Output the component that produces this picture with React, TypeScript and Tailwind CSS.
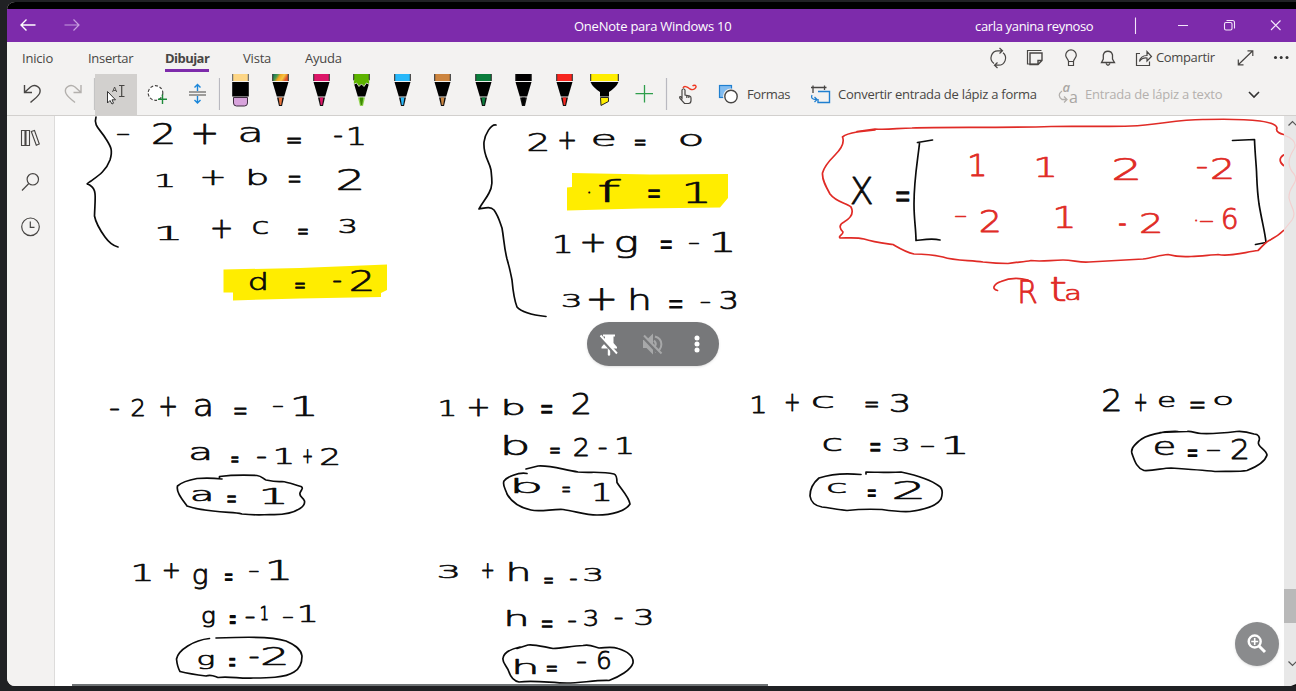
import type { ReactNode } from "react";

const INK_FONT = '"DejaVu Sans Light", "DejaVu Sans", sans-serif';
const INK_SIZE = 40;
const INK_STROKE = 0.85;

/* Ink box of a character relative to its origin on the baseline */
const boxes = new Map<string, { left: number; top: number; w: number; h: number }>();
function inkBox(ch: string) {
  const known = boxes.get(ch);
  if (known) return known;
  const ctx = document.createElement("canvas").getContext("2d")!;
  ctx.font = `200 ${INK_SIZE * 10}px ${INK_FONT}`;
  const m = ctx.measureText(ch);
  const box = {
    left: -m.actualBoundingBoxLeft / 10,
    top: -m.actualBoundingBoxAscent / 10,
    w: (m.actualBoundingBoxLeft + m.actualBoundingBoxRight) / 10,
    h: (m.actualBoundingBoxAscent + m.actualBoundingBoxDescent) / 10,
  };
  boxes.set(ch, box);
  return box;
}

type Mark = [string, number, number, number, number];

function Line({ marks, color = "#0b0b0b" }: { marks: Mark[]; color?: string }) {
  return (
    <g fill={color} stroke={color} strokeLinejoin="round" fontFamily={INK_FONT} fontWeight="200" fontSize={INK_SIZE}>
      {marks.map(([ch, x, y, w, h], i) => {
        const box = inkBox(ch);
        const pad = INK_STROKE;
        const sx = Math.max(w - pad, 1) / box.w;
        const sy = Math.max(h - pad, 1) / box.h;
        const tx = x + pad / 2 - box.left * sx;
        const ty = y + pad / 2 - box.top * sy;
        return (
          <text key={i} strokeWidth={INK_STROKE / Math.sqrt(sx * sy)} transform={`matrix(${sx} 0 0 ${sy} ${tx} ${ty})`}>
            {ch}
          </text>
        );
      })}
    </g>
  );
}

const BLACK_LINES: Mark[][] = [
  [["-", 117, 133, 12, 2], ["2", 153, 122, 20, 22], ["+", 193, 123, 23, 21], ["a", 240.5, 127, 19, 16], ["=", 287, 137, 14, 7], ["-", 334, 135.5, 8, 2], ["1", 349, 126, 15, 19.5]],
  [["1", 157, 173, 16, 14], ["+", 202, 170, 21.5, 15], ["b", 249, 168, 18, 17.5], ["=", 288.5, 176, 12, 7.5], ["2", 338, 168.5, 23.5, 21.5]],
  [["1", 158, 225, 21, 15], ["+", 212, 218.5, 19, 19.5], ["c", 253, 221, 15, 14], ["=", 298, 228.5, 10, 6.5], ["3", 339, 218, 16, 15.5]],
  [["d", 250, 272.5, 16, 18.5], ["=", 295, 282, 10, 7], ["-", 333, 280, 8, 2], ["2", 351, 270, 21, 21.5]],
  [["2", 528.5, 132, 19, 19.5], ["+", 559, 131.5, 16, 18], ["e", 593.5, 133.5, 21, 13], ["=", 634.5, 139, 11, 7], ["o", 680.5, 134.5, 21.5, 13]],
  [[".", 588, 191, 2, 2], ["f", 598.5, 178.5, 23, 23.5], ["=", 648, 189.5, 12, 8.5], ["1", 686, 181, 21.5, 22]],
  [["1", 555, 235, 15.5, 18.5], ["+", 582, 233, 22, 19], ["g", 616.5, 236, 20, 23], ["=", 660.5, 240.5, 11.5, 8.5], ["-", 689, 242.5, 10, 2], ["1", 713, 232, 19.5, 20]],
  [["3", 562.5, 293, 17, 15], ["+", 588.5, 288, 26, 22], ["h", 631, 287, 17.5, 23], ["=", 669, 300, 13.5, 9], ["-", 700.5, 301.5, 9.5, 2], ["3", 720, 290, 16, 19.5]],
  [["X", 851, 176, 21.5, 28], ["=", 896, 190.5, 13.5, 11]],
  [["-", 110, 408, 9, 2], ["2", 131.5, 398.5, 12.5, 18], ["+", 160, 396, 16, 20], ["a", 195, 398.5, 15.5, 18], ["=", 234, 408, 12.5, 7.5], ["-", 273, 405.5, 10, 2], ["1", 294, 395.5, 20.5, 20.5]],
  [["a", 191, 446.5, 18, 14], ["=", 231, 456, 7.5, 7], ["-", 257, 456.5, 9, 2], ["1", 276, 448, 16, 16], ["+", 303, 448.5, 9, 15], ["2", 321, 446.5, 17.5, 18.5]],
  [["a", 192.5, 490, 18, 12], ["=", 227, 496, 9, 7.5], ["1", 263, 488, 21.5, 16]],
  [["1", 440.5, 400, 14, 16], ["+", 468.5, 398.5, 19.5, 17.5], ["b", 504.5, 398, 19, 17.5], ["=", 541, 404, 11.5, 9.5], ["2", 572.5, 392.5, 17, 22]],
  [["b", 504.5, 434.5, 23, 21], ["=", 550, 446.5, 10, 7], ["2", 574, 436.5, 14, 20], ["-", 598.5, 447.5, 8, 2], ["1", 617, 436.5, 15, 18]],
  [["b", 514.5, 477, 25.5, 16.5], ["=", 562, 487, 8, 6], ["1", 594, 482.5, 15.5, 18.5]],
  [["1", 752, 396, 13, 17.5], ["+", 785.5, 393.5, 13.5, 18], ["c", 813, 395.5, 20.5, 13.5], ["=", 865, 401.5, 13, 6.5], ["3", 890.5, 393.5, 17.5, 19.5]],
  [["c", 823.5, 437.5, 18, 14], ["=", 870, 442.5, 10.5, 9], ["3", 893, 436.5, 15, 15], ["-", 921, 445, 13, 2], ["1", 945, 435.5, 20.5, 18.5]],
  [["c", 828, 482.5, 18, 11], ["=", 867.5, 488.5, 8.5, 8], ["2", 894, 479.5, 28, 20]],
  [["2", 1103, 387, 17, 24], ["+", 1135, 394, 11.5, 17.5], ["e", 1159, 396, 15.5, 12], ["=", 1190, 401.5, 14.5, 7.5], ["o", 1214.5, 396, 17.5, 10]],
  [["e", 1155, 440.5, 19, 15], ["=", 1187.5, 449, 10, 8], ["-", 1207, 449.5, 13, 2], ["2", 1231.5, 438, 16, 21]],
  [["1", 134, 563.5, 17, 18], ["+", 163.5, 563, 15.5, 15.5], ["g", 193.5, 568.5, 13.5, 21.5], ["=", 224.5, 572.5, 8, 8], ["-", 249, 570.5, 9.5, 2], ["1", 269, 559.5, 20, 21]],
  [["g", 202.5, 610.5, 12, 17], ["=", 229.5, 616, 6.5, 8.5], ["-", 245.5, 616, 9, 2], ["1", 261, 606, 7, 14.5], ["-", 283, 616, 10, 2], ["1", 300, 604.5, 15.5, 17.5]],
  [["g", 198.5, 654.5, 15, 15], ["=", 229, 657.5, 6.5, 9], ["-", 249.5, 656, 9, 2], ["2", 262.5, 646, 23.5, 19.5]],
  [["3", 438.5, 564.5, 19, 14], ["+", 482, 563, 11.5, 15.5], ["h", 509.5, 561, 18.5, 20.5], ["=", 544, 577.5, 9, 6.5], ["-", 570, 578.5, 7, 2], ["3", 584, 567.5, 17, 14.5]],
  [["h", 507.5, 609, 18.5, 17.5], ["=", 541.5, 620, 11, 8], ["-", 568, 620.5, 8, 2], ["3", 584, 610.5, 13, 16.5], ["-", 614.5, 617.5, 8, 2], ["3", 635, 608.5, 16.5, 17]],
  [["h", 515.5, 658, 20, 16], ["=", 546.5, 665, 10.5, 7], ["-", 577, 661.5, 9, 2], ["6", 598, 650.5, 12.5, 19.5]],
];

const RED_LINES: Mark[][] = [
  [["1", 970, 153, 14.5, 23], ["1", 1037, 156.5, 17.5, 21], ["2", 1114, 156, 24.5, 24], ["-", 1197, 166, 10, 2.2], ["2", 1212, 157, 20, 22]],
  [["-", 955, 215, 11, 2], ["2", 980.5, 208, 18.5, 24], ["1", 1056, 205.5, 17, 22.5], ["-", 1119, 223, 7, 2.5], ["2", 1141, 212.5, 19.5, 21], [".", 1195, 219, 2, 2], ["-", 1200, 220, 13, 2], ["6", 1223, 208, 14, 22]],
  [["R", 1020, 279, 17, 24], ["t", 1051, 277, 15, 24], ["a", 1066, 289, 13, 12]],
];

function Page() {
  return (
    <svg width="1229" height="570" viewBox="55 116 1229 570" className="block shrink-0 overflow-visible" fill="none">
      <g fill="#ffed00">
        <path d="M223.5 269.5L300 268L387 264.500V290L381 293V297L300 298.500L233 300.500V292.500H223.500Z" />
        <path d="M572 173L650 174.500L728 174V198L720 207.500L640 208.500L567 210.500V187.500L572 187Z" />
      </g>
      <g stroke="#0b0b0b" strokeWidth="1.7" strokeLinecap="round" strokeLinejoin="round">
        <path d="M96 117C93 126 101 130 106 139C111 147 113 150 110 160C106 171 98 176 91 181C85 185 87 183 91 186C97 190 95 199 94.500 216C96 224 100 230 105 237C110 244 114 246 118 247" />
        <path d="M496 125C491 124 485 134 484 142C483 156 489 160 491 170C492 180 493 186 489 193C486 199 482 203 479 209C485 208 490 206 494 210C499 217 500 223 502 228C504 239 504 247 507 259C510 269 511 275 512 280C513 291 515 302 517 307C522 313 533 315 546 316.500" />
        <path d="M932.500 140L917.500 142.500M919.500 143.500C917 165 914 180 914 204C914 220 916 229 916 240.500C922 240 931 238 940 240" />
        <path d="M1232.500 140.500L1254.500 139.500C1255 153 1256 162 1256.500 171C1257 182 1257 190 1259 204C1262 222 1265 232 1266 242.500L1255.500 244.500" />
        <path d="M222 479C213 478 205 478 197 478.500C189 480 182 482 177.500 486C176 492 182 499 187 506C196 509 204 510 213 511C226 513 234 512 242 514C252 515 261 515 270 514.500C281 515 293 513 300 508.500C304 506 305 504 304.500 501C303 497 299 497 300 493C301 490 304 488 301 486.500C295 485 288 482 282 481.500C276 482 271 481 266 480C263 479 262 476 257 475.500C245 475 232 475 219.500 476.500V479" />
        <path d="M527 473.500C518 472 507 477 504 481C502 485 506 490 507 494C512 503 522 508 531 510C540 512 552 509 563 509.500C575 511 585 515 597 515C612 515 626 511 630 504C629 497 621 489 617 482.500C617 479 617 475 614 474C602 471 590 473 578 472C564 470 550 465 538 466L526 469" />
        <path d="M861 474.500C846 473 831 474 819 478C813 483 810 490 810 496C811 503 816 506 822 507C830 508 838 509.500 847 510.500C860 509 871 509 882 509.500C892 511 900 512 910 511.500C922 510 936 507 941 499C943 493 942 488 939 486C930 479 915 475 901 472C889 473 878 472 866 472V474" />
        <path d="M1178 431.500C1163 431 1145 435 1139 441C1133 446 1130 450 1132.500 455C1135 462 1137 468 1144 470.500C1155 471 1162 468 1171 468C1186 469 1201 470 1215 471.500C1229 471 1238 472 1247 470.500C1256 467 1265 462 1267 455C1266 449 1257 447 1258.500 442C1261 437 1258 434 1254 434C1248 432 1242 431 1236.500 431.500C1224 433 1212 434 1201 433.500C1195 433 1192 431 1187 431.500L1160 432.500" />
        <path d="M209.500 638.500C194 640 178 650 176.500 659C177 664 178 668 180 671.500C190 674 198 675 206 676C211 674 214 676 218 677.500C230 676 241 679 253 678C266 678 285 678 294 672C301 668 302 662 302 656C301 648 293 644 286 641C274 637 251 637 235 637.500L216 638" />
        <path d="M520 647C511 649 504 652 503 658C502 663 507 666 509 672C511 678 514 681 519 682C535 680 551 683 567 683C581 683 595 680 609 680.500C619 677 631 670 633 663C634 655 626 651 618 648.500C611 646 605 648 599 648C594 647 591 644 583 645.500C572 646 563 648 553 648.500C544 647 534 644 528 645L517 648.500" />
      </g>
      <g stroke="#e02b26" strokeWidth="1.7" strokeLinecap="round" strokeLinejoin="round">
        <path d="M875 130L857 132C851 133 846 134 842.500 137C845 143 841 149 835 155C829 161 824 167 822.500 173C822 180 826 187 830 194C836 202 846 203 851 207C854 213 851 218 844 222C838 225 840 229 843 232C843 235 838 236 840 238C848 238 857 237 864 239C873 242 882 243 893 244.500C899 248 905 252 914 254C925 254 934 255 943 257C955 261 970 260 983 262C992 263 1000 263.500 1008 263.500C1017 262 1024 262 1031 260.500C1041 262 1051 260 1063 260C1073 260 1080 263 1089 262C1107 261 1125 260 1143 259C1152 258 1160 255 1168 254.500C1177 257 1183 257 1191 256.500C1201 256 1210 255 1218 254.500C1231 257 1245 252 1258 250.500C1262 247 1264 243 1269 240.500C1276 237 1280 234 1283.500 230.500" />
        <path d="M857 131.500L875 129C888 130 899 128 912 128C945 127 1005 128 1051 126.500C1081 126 1106 127 1131 126C1157 125 1180 119 1205 119.500C1224 119 1244 119 1260 121C1268 122 1276 124 1277 128C1275 132 1281 134 1283.500 134.500" />
        <path d="M1283.500 155C1279 158 1279 162 1283.500 165.500" />
        <path d="M997.500 290.500C991 289 994 284 1001 281.500C1009 278 1020 278 1028 280" />
      </g>
      {BLACK_LINES.map((m, i) => (
        <Line key={i} marks={m} />
      ))}
      {RED_LINES.map((m, i) => (
        <Line key={i} marks={m} color="#e02b26" />
      ))}
      <path d="M72 685H768" stroke="#6f7375" strokeWidth="2" />
    </svg>
  );
}

/* Icon cell whose drawing uses window coordinates */
function Cell({ x, y, w, h, children, className = "" }: { x: number; y: number; w: number; h: number; children: ReactNode; className?: string }) {
  return (
    <svg
      width={w}
      height={h}
      viewBox={`${x} ${y} ${w} ${h}`}
      fill="none"
      stroke="#484644"
      strokeWidth="1.2"
      className={`block shrink-0 ${className}`}
    >
      {children}
    </svg>
  );
}

function Pen({ color, tip, pencil }: { color: string; tip?: string; pencil?: boolean }) {
  return (
    <svg width="40.45" height="41" viewBox="-20.5 74 40.45 41" className="block shrink-0">
      <rect x="-8.300" y="74" width="16.600" height="7" fill="#222" />
      <rect x="-7.300" y="74" width="14.600" height="7" fill={color} />
      <path d="M-8 82H8L3.700 96.500H-3.700Z" fill="#000" />
      {pencil && (
        <path d="M-8 80.500H8V84.500L5 83L2.500 86.500L0 84L-2.500 86.500L-5 83L-8 84.500Z" fill={color} stroke="#f3f2f1" strokeWidth="0.8" />
      )}
      {pencil && <rect x="-7.300" y="79" width="14.600" height="3" fill={color} />}
      <path d="M-3.500 97.500H3.500L1.500 106H-1.500Z" fill={pencil ? "#8fd14f" : "#111"} />
      <path d="M-1.900 97.500H1.900L0.700 105H-0.700Z" fill={tip ?? color} />
    </svg>
  );
}

function TitleBar() {
  return (
    <div className="flex h-[33px] shrink-0 items-center bg-[#7d2bab] text-[13px] text-white">
      <Cell x={7} y={9} w={88} h={33}>
        <path d="M35.500 25H21M26.500 19.500L21 25L26.500 30.500" stroke="#fff" strokeWidth="1.4" />
        <path d="M64.500 25H79M73.500 19.500L79 25L73.500 30.500" stroke="#c79ddf" strokeWidth="1.200" />
      </Cell>
      <span className="ml-[479px] w-[401px] pt-0.5 whitespace-nowrap tracking-[-0.24px]">OneNote para Windows 10</span>
      <span className="w-[120px] pt-0.5 whitespace-nowrap tracking-[-0.34px]">carla yanina reynoso</span>
      <Cell x={1095} y={9} w={201} h={33}>
        <g stroke="#f3e6fa" strokeWidth="1.1">
          <path d="M1135.500 17.500V34" />
          <path d="M1178 25.500H1188" />
          <rect x="1224.500" y="22.500" width="7.500" height="7.500" rx="1.500" />
          <path d="M1226.500 20.500H1232.500Q1234.500 20.500 1234.500 22.500V28.500" />
          <path d="M1271 20.500L1280.500 30M1280.500 20.500L1271 30" />
        </g>
      </Cell>
    </div>
  );
}

function Tabs() {
  return (
    <div className="flex h-8 shrink-0 text-[13px] text-[#484644]">
      <nav className="flex w-[975px] pl-[15px] leading-8">
        <span className="w-[66px] whitespace-nowrap tracking-[-0.2px]">Inicio</span>
        <span className="w-[77px] whitespace-nowrap tracking-[-0.3px]">Insertar</span>
        <span className="flex w-[77px] flex-col font-bold tracking-[-0.55px]">
          <span className="h-[27px] whitespace-nowrap">Dibujar</span>
          <span className="h-[3px] w-11 bg-[#7d2bab]" />
        </span>
        <span className="w-[63px] pl-px whitespace-nowrap tracking-[-0.2px]">Vista</span>
        <span className="whitespace-nowrap tracking-[-0.2px]">Ayuda</span>
      </nav>
      <Cell x={982} y={42} w={174} h={32}>
        <path d="M994 63.500A7 7 0 0 1 998.500 50.800H1002M1003 52.800A7 7 0 0 1 998.500 65.200H995M999.500 48L1002.500 50.800L999.500 53.500M997.500 62.500L994.500 65.200L997.500 68" />
        <path d="M1038.500 64H1027.500V50.500H1041.500" />
        <path d="M1030 53H1042V60.500L1038 64.500H1030ZM1042 60.500H1038V64.500" strokeWidth="1.400" />
        <path d="M1068.500 61.500C1068.500 59 1065.700 58 1065.700 55.200A5.300 5.300 0 0 1 1076.300 55.200C1076.300 58 1073.500 59 1073.500 61.500ZM1068.500 61.500V65.500H1073.500V61.500" />
        <path d="M1101.500 62.500H1114.500L1112.500 59V55A4.700 4.700 0 0 0 1103.300 55V59ZM1106 63.500Q1108 67 1110 63.500" strokeWidth="1.300" />
        <path d="M1140 53.500H1136.500V65.500H1149.500V61.500" />
        <path d="M1139.500 61.500Q1140.500 55.500 1147 55.500V51.500L1151.500 56.500L1147 61V58Q1142 57.500 1139.500 61.500Z" />
      </Cell>
      <span className="w-[59px] whitespace-nowrap leading-[31px] tracking-[-0.35px]">Compartir</span>
      <Cell x={1215} y={42} w={81} h={32}>
        <path d="M1238.500 64.500L1252.500 51M1247.500 50.800H1252.800V56M1238.300 59.500V64.800H1243.500" />
        <g fill="#333" stroke="none">
          <circle cx="1275.500" cy="57.500" r="1.500" />
          <circle cx="1281.200" cy="57.500" r="1.500" />
          <circle cx="1287" cy="57.500" r="1.500" />
        </g>
      </Cell>
    </div>
  );
}

function Tools() {
  return (
    <div className="flex h-[41px] shrink-0 items-center text-[13px] text-[#484644]">
      <Cell x={7} y={74} w={88} h={41}>
        <path d="M24.500 85V92.500H32M25 92L30.500 87C35 83.500 41 87 40 92C39.500 96 34 99 30.500 102.500" strokeWidth="1.400" />
        <path d="M81 85V92.500H73.500M80.500 92L75 87C70.500 83.500 64.500 87 65.500 92C66 96 71 99 75 102.500" stroke="#b3b0ad" strokeWidth="1.400" />
        <path d="M94.500 78V110" stroke="#c4c4c4" />
      </Cell>
      <Cell x={95} y={74} w={42} h={41} className="bg-[#d2d0ce]">
        <path d="M107.500 91.500V103L110 100.500L112 104L113.500 103.200L112 99.800H115.500Z" fill="#fff" stroke="#333" strokeWidth="1" />
        <path d="M112.500 92L114.600 87L116.700 92M113.300 90.500H116" strokeWidth="0.9" />
        <path d="M119 85.500H124.500M119 96.500H124.500M121.700 85.500V96.500" />
      </Cell>
      <Cell x={137} y={74} w={83} h={41}>
        <circle cx="155.500" cy="93" r="7.300" fill="#fff" strokeDasharray="3 1.800" />
        <path d="M157 99H168V105H157Z" fill="#f3f2f1" stroke="none" />
        <path d="M162.500 94.500V104M158 99.300H167" stroke="#1d8a3a" strokeWidth="1.400" />
        <path d="M189 92H206M189 95H206" strokeWidth="1.200" />
        <path d="M197.500 91V84.500M194.500 87.500L197.500 84.500L200.500 87.500M197.500 96V103M194.500 100L197.500 103L200.500 100" stroke="#1a86d9" strokeWidth="1.400" />
        <path d="M219.500 78V110" stroke="#b9b9c0" />
      </Cell>
      <div className="flex w-[404px] shrink-0">
        <svg width="40.45" height="41" viewBox="-20.5 74 40.45 41" className="block shrink-0">
          <rect x="-8.300" y="74" width="16.600" height="7" fill="#555" />
          <rect x="-7.300" y="74" width="14.600" height="7" fill="#fdd686" />
          <rect x="-8.300" y="82" width="16.600" height="14.500" fill="#000" />
          <path d="M-7 97.500H7V103Q7 106 4 106H-4Q-7 106 -7 103Z" fill="#d8a3dc" stroke="#3b2b3d" />
        </svg>
        <svg width="40.45" height="41" viewBox="-20.5 74 40.45 41" className="block shrink-0">
          <defs>
            <linearGradient id="rainbow" x1="0" y1="0" x2="1" y2="0.3">
              <stop offset="0" stopColor="#11715a" />
              <stop offset="0.3" stopColor="#4a9a4c" />
              <stop offset="0.500" stopColor="#f5a623" />
              <stop offset="0.750" stopColor="#f5c542" />
              <stop offset="1" stopColor="#e2572b" />
            </linearGradient>
          </defs>
          <rect x="-8.300" y="74" width="16.600" height="7" fill="#222" />
          <rect x="-7.300" y="74" width="14.600" height="7" fill="url(#rainbow)" />
          <path d="M-8 82H8L3.700 96.500H-3.700Z" fill="#000" />
          <path d="M-3.500 97.500H3.500L1.500 106H-1.500Z" fill="#111" />
          <path d="M-1.900 97.500H1.900L0.700 105H-0.700Z" fill="#e8743b" />
        </svg>
        <Pen color="#dc1668" />
        <Pen color="#5db300" tip="#3c8a00" pencil />
        <Pen color="#28b8fa" />
        <Pen color="#cd853f" />
        <Pen color="#0a7d3c" />
        <Pen color="#000000" />
        <Pen color="#f7261f" />
        <svg width="40.45" height="41" viewBox="-20.5 74 40.45 41" className="block shrink-0">
          <rect x="-14.300" y="74" width="28.600" height="7" fill="#222" />
          <rect x="-13.300" y="74" width="26.600" height="7" fill="#ffed00" />
          <path d="M-14 82H14Q12 87 4.500 92V96.500H-4.500V92Q-12 87 -14 82Z" fill="#000" />
          <path d="M-4 97.500H4V101.500L-3.500 105.500Z" fill="#ffed00" stroke="#222" strokeWidth="1" />
        </svg>
      </div>
      <Cell x={624} y={74} w={122} h={41}>
        <path d="M644.500 85V102.500M635.500 93.700H653" stroke="#2f9e4c" strokeWidth="1.300" />
        <path d="M666.500 78V110" stroke="#b9b9c0" />
        <path d="M682 99.500V90Q683.500 87.500 685 90V95L690 96.200Q691 96.500 691 98V100.500Q691 103.500 688.500 103.500H684.500L680 98.500Q679 96.500 680.500 96.500L682 98M686.800 95.500V98M688.800 96V98" />
        <path d="M683 88C684 85.500 687 86.500 690 89C694 91 697.500 87 695.500 85.500Q694 84.800 692.500 85.800" stroke="#ee3a24" strokeWidth="1.400" />
        <rect x="719.500" y="85.500" width="12" height="12" fill="#83bdf0" stroke="#1f7fd0" />
        <circle cx="731" cy="96.500" r="8" fill="#f3f2f1" stroke="none" />
        <circle cx="731" cy="96.500" r="6.200" fill="#fff" strokeWidth="1.400" />
      </Cell>
      <span className="w-[60px] pl-px whitespace-nowrap tracking-[-0.35px]">Formas</span>
      <Cell x={806} y={74} w={32} h={41}>
        <path d="M811 87.500H826.500M813 85.500V93M824.500 85.500V90" strokeWidth="1.300" />
        <path d="M818 91.500H829.500V102.500H818V99" stroke="#1f7fd0" strokeWidth="1.400" />
        <path d="M812 95Q810 99.500 816.500 99.500M814.500 97L817 99.500L814.500 102" stroke="#1f7fd0" strokeWidth="1.300" />
      </Cell>
      <span className="w-[215px] whitespace-nowrap tracking-[-0.27px]">Convertir entrada de lápiz a forma</span>
      <div className="flex h-[41px] w-[32px] shrink-0 items-start pl-[5px]">
        <svg width="27" height="41" viewBox="1058 74 27 41" className="block shrink-0 overflow-visible" fill="none" stroke="#b3b0ad" strokeWidth="1.300">
          <path d="M1062 91Q1056.500 95 1062 99.500L1066 99.500M1064 96.500L1067 99.500L1064 102.500" />
          <g fill="#a9a6a3" stroke="none" fontFamily='"Open Sans", sans-serif'>
            <text x="1062.500" y="92" fontSize="13" fontStyle="italic" fontWeight="600">a</text>
            <text x="1069" y="103" fontSize="16">a</text>
          </g>
        </svg>
      </div>
      <span className="w-[137px] whitespace-nowrap tracking-[-0.22px] text-[#b3b0ad]">Entrada de lápiz a texto</span>
      <Cell x={1222} y={74} w={74} h={41}>
        <path d="M1249 92L1254 97L1259 92" stroke="#333" strokeWidth="1.600" />
      </Cell>
    </div>
  );
}

function SideBar() {
  return (
    <div className="flex w-12 shrink-0 flex-col border-r border-[#dddcdb] bg-[#f3f2f1]">
      <Cell x={7} y={116} w={47} h={130}>
        <path d="M21.500 130.500H25V145.500H21.500ZM26 130.500H29.500V145.500H26ZM31.300 131.500L34.500 130.500L39.300 144L36.300 145.200Z" strokeWidth="1.100" />
        <circle cx="32.800" cy="179.300" r="5.700" />
        <path d="M28.800 183.500L22 190.500" />
        <circle cx="30.500" cy="226.800" r="8.800" />
        <path d="M30.300 221.500V227.300H34.500" />
      </Cell>
    </div>
  );
}

export default function App() {
  return (
    <div className="relative flex h-[691px] w-[1296px] overflow-hidden bg-[#202124] pt-0.5 pb-[5px] pl-[7px] font-['Open_Sans',sans-serif]">
      <div className="flex min-w-0 flex-1 flex-col overflow-hidden rounded-l-lg bg-[#f3f2f1]">
        <div className="h-[7px] shrink-0 bg-black" />
        <TitleBar />
        <Tabs />
        <Tools />
        <div className="h-px shrink-0 bg-[#d2d0ce]" />
        <div className="flex min-h-0 flex-1">
          <SideBar />
          <div className="bg-white">
            <Page />
          </div>
          <div className="flex w-3 shrink-0 flex-col bg-[#e8e8e8]">
            <Cell x={1284} y={116} w={12} h={473}>
              <path d="M1288.500 125.500L1292.500 121.500L1296.500 125.500" stroke="#555" />
              <path d="M1284 135C1290 137 1298 142 1294 149C1289 157 1286 165 1294 174C1300 183 1288 186 1289 198C1291 208 1297 212 1292 220L1284 230" stroke="#f3cfcf" />
            </Cell>
            <div className="h-[34px] bg-[#b9b9b9]" />
            <Cell x={1284} y={623} w={12} h={63}>
              <path d="M1288.500 661.500L1292.500 665.500L1296.500 661.500" stroke="#555" />
              <path d="M1291 686L1296 684V686Z" fill="#111" stroke="none" />
            </Cell>
          </div>
        </div>
      </div>

      <div className="absolute top-[322px] left-[587px] flex h-11 w-[132px] items-center rounded-full bg-[#77787a] shadow">
        <svg width="132" height="44" viewBox="587 322 132 44" fill="none">
          <path d="M603 334.500H615V336.500H613.500V343L617 347V348.500H610.200V355L609 356L607.800 355V348.500H601.500V347L605 343V336.500H603Z" fill="#fff" />
          <path d="M599.500 336.500L615.500 354" stroke="#77787a" strokeWidth="3.500" />
          <path d="M600.500 335.500L617 353.500" stroke="#fff" strokeWidth="1.900" />
          <g stroke="#a7a8a9" strokeWidth="2">
            <path d="M644 341H647L652 336V352L647 347H644Z" fill="#a7a8a9" />
            <path d="M654 340.500Q657.500 344 654 347.500M655 336.500C663.500 339 663.500 349.500 655 352" />
            <path d="M643 337L659.500 354.500" stroke="#77787a" strokeWidth="3" />
            <path d="M644 335.500L661.500 353.500" />
          </g>
          <g fill="#fff">
            <circle cx="697" cy="338" r="2.500" />
            <circle cx="697" cy="344" r="2.500" />
            <circle cx="697" cy="350" r="2.500" />
          </g>
        </svg>
      </div>

      <div className="absolute top-[622px] left-[1235px] flex size-11 items-center justify-center rounded-full bg-[#8a8b8d] shadow">
        <svg width="44" height="44" viewBox="1235 622 44 44" fill="none" stroke="#fff">
          <circle cx="1254.700" cy="641.500" r="6" strokeWidth="2.400" />
          <path d="M1254.700 638V645M1251.200 641.500H1258.200" strokeWidth="1.600" />
          <path d="M1259 646L1265 652" strokeWidth="3" />
        </svg>
      </div>
    </div>
  );
}
